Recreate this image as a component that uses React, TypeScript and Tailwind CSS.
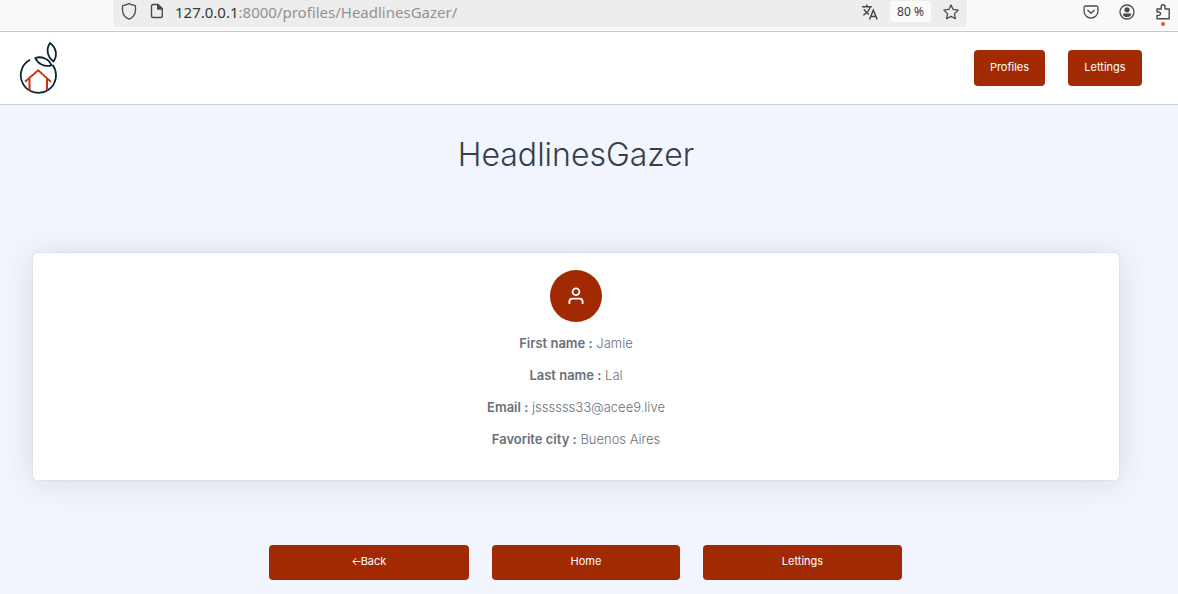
import type { ReactNode } from "react";

const BUTTON =
  "flex items-center justify-center rounded bg-[#a12a03] text-[11px] leading-4 text-white hover:bg-[#8a2402]";

const details = [
  { label: "First name :", value: "Jamie" },
  { label: "Last name :", value: "Lal" },
  { label: "Email :", value: "jssssss33@acee9.live" },
  { label: "Favorite city :", value: "Buenos Aires" },
];

function ToolButton({ label, children }: { label: string; children: ReactNode }) {
  return (
    <button type="button" aria-label={label} className="relative shrink-0 text-[#4a4a4a]">
      {children}
    </button>
  );
}

function BrowserBar() {
  return (
    <div className="flex h-8 items-start border-b border-[#c8c8cc] bg-[#fafafa] pr-[7px] pl-[113px]">
      <div className="flex h-[27px] min-w-0 flex-1 items-start rounded-b bg-[#ededed] pr-2 pl-2">
        <div className="flex h-[23px] min-w-0 flex-1 items-center">
          <ToolButton label="Tracking protection">
            <svg width="16" height="18" viewBox="0 0 16 18" fill="none" stroke="currentColor" strokeWidth="1.3" strokeLinejoin="round">
              <path d="M8 .6 Q11 2 14.300 2.700 Q15.400 9.900 12.200 13.400 Q10.600 15.200 8 16.200 Q5.400 15.200 3.800 13.400 Q.6 9.900 1.700 2.700 Q5 2 8 .6Z" />
            </svg>
          </ToolButton>
          <span className="w-3" />
          <ToolButton label="Site information">
            <svg width="16" height="18" viewBox="0 0 16 18" fill="none" stroke="currentColor" strokeWidth="1.4" strokeLinejoin="round">
              <path d="M4 1.500h5l4.300 4.300V13a1.500 1.500 0 0 1-1.500 1.500H4A1.500 1.500 0 0 1 2.500 13V3A1.500 1.500 0 0 1 4 1.500Z" />
              <path d="M8.700 1.500v4.600h4.600Z" fill="currentColor" />
            </svg>
          </ToolButton>
          <label htmlFor="address" className="ml-2.5 font-['Noto_Sans',sans-serif] text-[15px] leading-5 text-[#383838]">
            127.0.0.1
          </label>
          <input
            id="address"
            readOnly
            value=":8000/profiles/HeadlinesGazer/"
            className="min-w-0 flex-1 bg-transparent font-['Noto_Sans',sans-serif] text-[15px] leading-5 text-[#929292] outline-none"
          />
        </div>
        <div className="flex h-[23px] items-center">
          <ToolButton label="Translate page">
            <svg width="16" height="16" viewBox="0 0 16 16" fill="none" stroke="currentColor" strokeWidth="1.500">
              <path d="M0 2.700h9.800M4.800.4v2.300M1.300 11.200C5 9.200 7.200 6.500 8.200 2.900M2 5.300c1.200 2.200 2.700 3.700 5 5" />
              <path d="M7.500 15.500 11.300 6.300l3.900 9.200M8.800 12.400h5" />
            </svg>
          </ToolButton>
          <button type="button" className="mr-3 ml-3 h-[21px] w-[41px] rounded-[3px] bg-[#fafafa] font-['Noto_Sans',sans-serif] text-[12px] leading-4 whitespace-nowrap text-[#383838]">
            80 %
          </button>
          <ToolButton label="Bookmark page">
            <svg width="16" height="16" viewBox="0 0 16 16" fill="none" stroke="currentColor" strokeWidth="1.250" strokeLinejoin="round">
              <path d="m8 .9 2.100 4.500 5.100.7-3.700 3.500.9 5.200L8 12.400l-4.400 2.400.9-5.200L.8 6.100l5.100-.7Z" />
            </svg>
          </ToolButton>
        </div>
      </div>
      <div className="ml-[116px] flex h-[23px] shrink-0 items-center gap-5">
        <ToolButton label="Save to Pocket">
          <svg width="16" height="16" viewBox="0 0 16 16" fill="none" stroke="currentColor" strokeWidth="1.300" strokeLinecap="round" strokeLinejoin="round">
            <path d="M2.500 2h11a1.400 1.400 0 0 1 1.400 1.400v3.800a6.900 6.900 0 0 1-13.800 0V3.400A1.400 1.400 0 0 1 2.500 2Z" />
            <path d="m4.800 6.300 3.200 3 3.200-3" />
          </svg>
        </ToolButton>
        <ToolButton label="Account">
          <svg width="16" height="16" viewBox="0 0 16 16" fill="none" stroke="currentColor" strokeWidth="1.300">
            <circle cx="8" cy="8" r="7" />
            <circle cx="8" cy="5.800" r="2.600" fill="currentColor" stroke="none" />
            <path d="M3.700 9.400h8.600C12 12 10.300 13 8 13s-4-1-4.300-3.600Z" fill="currentColor" stroke="none" />
          </svg>
        </ToolButton>
        <ToolButton label="Extensions">
          <svg width="16" height="16" viewBox="0 0 16 16" fill="none" stroke="currentColor" strokeWidth="1.400" strokeLinejoin="round">
            <path d="M2 14.800V11.400h1.800a1.700 1.700 0 0 0 0-3.400H2V5h4.200V2.700a1.900 1.900 0 0 1 3.800 0V5h4.200v9.800Z" />
          </svg>
          <span className="absolute -bottom-1.5 left-1.5 size-1 rounded-full bg-[#e95420]" />
        </ToolButton>
      </div>
    </div>
  );
}

function Logo() {
  return (
    <svg width="40" height="56" viewBox="0 -1 40 56" fill="none" strokeWidth="1.800" aria-hidden="true">
      <path d="M11 18.800A17.600 17.600 0 1 0 33.500 23.800" stroke="#0b2530" />
      <path d="M16.200 17C22.500 14.800 30.500 18 32.300 24.300C25.500 26.500 18.500 22.500 16.200 17Z" stroke="#0b2530" strokeLinejoin="round" />
      <path d="M31 2C27 8 28 15.500 34.500 20.500C39 14 37 6.500 31 2Z" stroke="#0b2530" strokeLinejoin="round" />
      <path d="M6 40.800 19.200 29.300 32 40.800" stroke="#be3511" />
      <path d="M10.500 37.500v12M28 37.500v12" stroke="#be3511" strokeWidth="2" />
    </svg>
  );
}

export default function App() {
  return (
    <div className="min-h-screen bg-[#f2f5fd] font-[Inter,sans-serif]">
      <BrowserBar />
      <header className="flex h-[73px] items-center justify-between border-b border-[#d0d4dd] bg-white pr-9 pl-[19px]">
        <a href="#home" aria-label="Home">
          <Logo />
        </a>
        <nav className="flex gap-[23px]">
          <a href="#profiles" className={`${BUTTON} h-9 w-[71px] pb-0.5`}>Profiles</a>
          <a href="#lettings" className={`${BUTTON} h-9 w-[74px] pb-0.5`}>Lettings</a>
        </nav>
      </header>
      <main className="pt-7 pr-[59px] pb-3.5 pl-[33px]">
        <h1 className="text-center text-[32px] leading-[44px] font-light text-[#363f4a]">HeadlinesGazer</h1>
        <section className="mt-[76px] rounded bg-white pt-[17px] pb-[25px] text-center shadow-[0_0_1px_rgba(0,0,0,0.3),0_2px_32px_rgba(33,55,75,0.14)]">
          <div className="mx-auto mb-[5px] flex size-[52px] items-center justify-center rounded-full bg-[#a12a03] text-white">
            <svg width="18" height="18" viewBox="0 0 18 18" fill="none" stroke="currentColor" strokeWidth="1.800" strokeLinejoin="round" aria-hidden="true">
              <circle cx="9" cy="4.800" r="3.400" />
              <path d="M2.400 17v-2.300a3 3 0 0 1 3-3h7.200a3 3 0 0 1 3 3V17" />
            </svg>
          </div>
          {details.map(({ label, value }) => (
            <p key={label} className="text-[13px] leading-8 text-[#69707a]">
              <strong className="font-semibold">{label}</strong> <span className="font-light">{value}</span>
            </p>
          ))}
        </section>
        <div className="mt-[65px] flex gap-[23px] pr-[217px] pl-[236px]">
          <a href="#back" className={`${BUTTON} h-[35px] min-w-0 flex-[200] pb-[3px]`}>
            <svg width="9" height="9" viewBox="0 0 9 9" fill="none" stroke="currentColor" aria-hidden="true">
              <path d="M8.500 4.500H1M4.300 1 .9 4.500 4.300 8" />
            </svg>
            Back
          </a>
          <a href="#home" className={`${BUTTON} h-[35px] min-w-0 flex-[188] pb-[3px]`}>Home</a>
          <a href="#lettings" className={`${BUTTON} h-[35px] min-w-0 flex-[199] pb-[3px]`}>Lettings</a>
        </div>
      </main>
    </div>
  );
}
